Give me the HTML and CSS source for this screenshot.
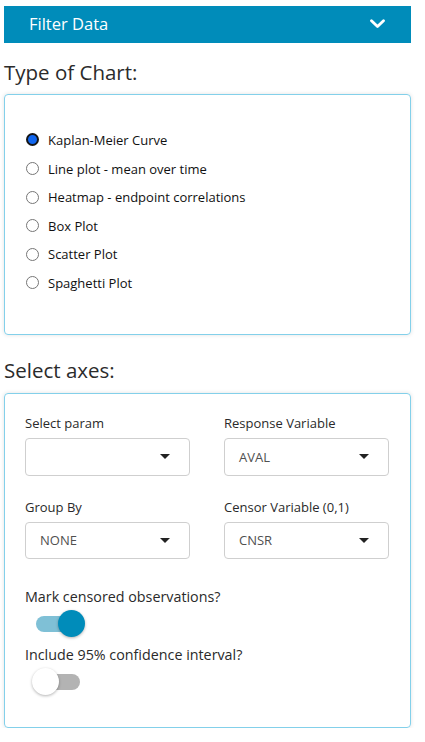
FILE: index.html
```html
<!DOCTYPE html>
<html>
<head>
<meta charset="utf-8">
<link rel="stylesheet" href="styles.css">
</head>
<body>
<div class="page">
  <div class="panel-header">
    <span class="panel-title">Filter Data</span>
    <svg class="chevron" width="15" height="10" viewBox="0 0 15 10"><path d="M1.5 1.8 L7.5 7.6 L13.5 1.8" fill="none" stroke="#fff" stroke-width="2.8" stroke-linecap="round" stroke-linejoin="round"/></svg>
  </div>

  <h2 class="section-title first">Type of Chart:</h2>
  <div class="card chart-card">
    <div class="radio-row"><span class="radio checked"></span><span class="radio-label">Kaplan-Meier Curve</span></div>
    <div class="radio-row"><span class="radio"></span><span class="radio-label">Line plot - mean over time</span></div>
    <div class="radio-row"><span class="radio"></span><span class="radio-label">Heatmap - endpoint correlations</span></div>
    <div class="radio-row"><span class="radio"></span><span class="radio-label">Box Plot</span></div>
    <div class="radio-row"><span class="radio"></span><span class="radio-label">Scatter Plot</span></div>
    <div class="radio-row"><span class="radio"></span><span class="radio-label">Spaghetti Plot</span></div>
  </div>

  <h2 class="section-title second">Select axes:</h2>
  <div class="card axes-card">
    <div class="grid">
      <div class="field">
        <div class="field-label">Select param</div>
        <div class="select"><span class="select-value"></span><span class="caret"></span></div>
      </div>
      <div class="field">
        <div class="field-label">Response Variable</div>
        <div class="select"><span class="select-value">AVAL</span><span class="caret"></span></div>
      </div>
      <div class="field">
        <div class="field-label">Group By</div>
        <div class="select"><span class="select-value">NONE</span><span class="caret"></span></div>
      </div>
      <div class="field">
        <div class="field-label">Censor Variable (0,1)</div>
        <div class="select"><span class="select-value">CNSR</span><span class="caret"></span></div>
      </div>
    </div>

    <div class="switch-block first-switch">
      <div class="switch-label">Mark censored observations?</div>
      <div class="switch on"><span class="track"></span><span class="thumb"></span></div>
    </div>
    <div class="switch-block">
      <div class="switch-label">Include 95% confidence interval?</div>
      <div class="switch"><span class="track"></span><span class="thumb"></span></div>
    </div>
  </div>
</div>
</body>
</html>
```

FILE: styles.css
```css
* { box-sizing: border-box; }
html, body {
  margin: 0;
  padding: 0;
  background: #fff;
  font-family: "Open Sans", "Noto Sans", "Liberation Sans", sans-serif;
  color: #222;
}
.page {
  width: 407px;
  margin-left: 4px;
  padding-top: 6px;
}
.panel-header {
  height: 37px;
  background: #008cba;
  display: flex;
  align-items: center;
  justify-content: space-between;
  padding: 0 26px 0 25px;
}
.panel-title {
  color: #fff;
  font-size: 16.5px;
  line-height: 20px;
  position: relative;
  top: -1px;
}
.chevron { display: block; margin-top: -2px; }

.section-title {
  font-weight: 400;
  font-size: 20.5px;
  line-height: 28px;
  margin: 0;
  color: #2b2b2b;
}
.section-title.first { margin-top: 15px; margin-bottom: 8px; }
.section-title.second { margin-top: 21px; margin-bottom: 9px; }

.card {
  border: 1px solid #83d0ea;
  border-radius: 4px;
  box-shadow: 0 0 4px rgba(0,0,0,0.12);
  width: 407px;
}
.chart-card {
  height: 241px;
  padding: 30.7px 0 0 20px;
}
.radio-row {
  height: 28.6px;
  display: flex;
  align-items: center;
}
.radio {
  width: 13px;
  height: 13px;
  border-radius: 50%;
  border: 1px solid #767676;
  background: #fff;
  margin-left: 1px;
  flex: none;
}
.radio.checked {
  border: 2.5px solid #151515;
  background: #1166ee;
}
.radio-label {
  font-size: 13px;
  margin-left: 9px;
  color: #111;
}

.axes-card {
  height: 335px;
  padding: 20px 20px 0 20px;
}
.grid {
  display: grid;
  grid-template-columns: 165px 165px;
  column-gap: 34px;
  row-gap: 22px;
}
.field-label {
  font-size: 13px;
  line-height: 18px;
  color: #2a2a2a;
}
.select {
  margin-top: 6px;
  height: 37.5px;
  border: 1px solid #cfcfcf;
  border-radius: 4px;
  display: flex;
  align-items: center;
  justify-content: space-between;
  padding: 0 19px 0 14px;
}
.select-value {
  font-size: 13px;
  color: #505050;
  line-height: 18px;
}
.caret {
  width: 0;
  height: 0;
  border-left: 5px solid transparent;
  border-right: 5px solid transparent;
  border-top: 5px solid #222;
}

.switch-block.first-switch { margin-top: 28px; }
.switch-block + .switch-block { margin-top: 8px; }
.switch-label {
  font-size: 14.3px;
  line-height: 19px;
  color: #2a2a2a;
}
.switch {
  position: relative;
  width: 53px;
  height: 27px;
  margin-top: 4px;
  margin-left: 7px;
}
.track {
  position: absolute;
  left: 4px;
  top: 5.5px;
  width: 44px;
  height: 16px;
  border-radius: 8px;
  background: #b3b3b3;
}
.thumb {
  position: absolute;
  top: 0;
  left: 0;
  width: 27px;
  height: 27px;
  border-radius: 50%;
  background: #fff;
  box-shadow: 0 1px 3px rgba(0,0,0,0.3);
}
.switch.on .track { background: #7fc0d6; }
.switch.on .thumb {
  left: 26px;
  background: #008cba;
}
```
